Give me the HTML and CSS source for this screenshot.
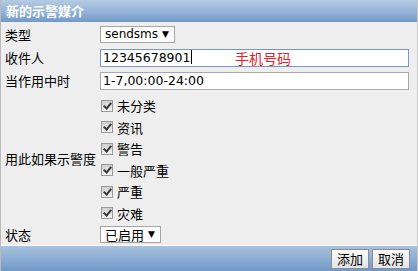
FILE: index.html
```html
<!DOCTYPE html>
<html lang="zh-CN">
<head>
    <meta charset="UTF-8">
    <title>新的示警媒介</title>
    <link rel="stylesheet" href="styles.css">
</head>
<body>
    <div class="dialog">
        <div class="title">新的示警媒介</div>
        <div class="form">
            <div class="row r1">
                <div class="label">类型</div>
                <div class="field"><div class="select sel-type"><span>sendsms</span><span class="arrow">▼</span></div></div>
            </div>
            <div class="row r2">
                <div class="label">收件人</div>
                <div class="field">
                    <div class="input focus">12345678901<span class="caret"></span></div>
                    <span class="hint">手机号码</span>
                </div>
            </div>
            <div class="row r3">
                <div class="label">当作用中时</div>
                <div class="field"><div class="input">1-7,00:00-24:00</div></div>
            </div>
            <div class="row checks">
                <div class="label">用此如果示警度</div>
                <div class="field list">
                    <div class="check"><span class="box"></span>未分类</div>
                    <div class="check"><span class="box"></span>资讯</div>
                    <div class="check"><span class="box"></span>警告</div>
                    <div class="check"><span class="box"></span>一般严重</div>
                    <div class="check"><span class="box"></span>严重</div>
                    <div class="check"><span class="box"></span>灾难</div>
                </div>
            </div>
            <div class="row r4">
                <div class="label">状态</div>
                <div class="field"><div class="select sel-state"><span>已启用</span><span class="arrow">▼</span></div></div>
            </div>
        </div>
        <div class="footer">
            <button class="btn">添加</button>
            <button class="btn">取消</button>
        </div>
    </div>
</body>
</html>
```

FILE: styles.css
```css
body {
    margin: 0;
    font-family: "DejaVu Sans", "Noto Sans CJK SC", sans-serif;
    font-size: 13px;
    color: #000;
    background: #ffffff;
}
.dialog {
    width: 416px;
    height: 271px;
    border-left: 1px solid #b9b9b9;
    border-right: 1px solid #c9c9c9;
    background: #eeeeee;
    display: flex;
    flex-direction: column;
}
.title {
    height: 22px;
    line-height: 22px;
    padding-left: 5px;
    color: #ffffff;
    font-family: "Noto Sans CJK SC", sans-serif;
    font-weight: bold;
    font-size: 13px;
    background: linear-gradient(#b6cbe3, #8fb0d6 60%, #7299c6);
}
.form {
    flex: 1;
    border-bottom: 1px solid #ffffff;
}
.row {
    display: flex;
    align-items: center;
}
.label {
    width: 95px;
    padding-left: 4px;
    font-family: "Noto Sans CJK SC", sans-serif;
    font-size: 13px;
}
.field {
    flex: 1;
    display: flex;
    align-items: center;
    position: relative;
}
.r1 { height: 24px; }
.r2 { height: 23px; }
.r3 { height: 23px; }
.r4 { height: 21px; }
.select {
    box-sizing: border-box;
    height: 17px;
    line-height: 15px;
    display: flex;
    justify-content: space-between;
    background: #ffffff;
    border: 1px solid #a5a5a5;
    padding: 0 5px 0 4px;
    font-size: 13px;
}
.sel-type {
    width: 75px;
    font-size: 12px;
}
.sel-state {
    width: 61px;
    font-family: "Noto Sans CJK SC", sans-serif;
}
.arrow {
    font-family: "DejaVu Sans", sans-serif;
    font-size: 9px;
}
.input {
    width: 305px;
    height: 16px;
    line-height: 16px;
    background: #ffffff;
    border: 1px solid #a9a9a9;
    padding-left: 2px;
    font-size: 12.5px;
}
.input.focus {
    border-color: #7897c4;
}
.caret {
    display: inline-block;
    width: 1px;
    height: 14px;
    background: #000;
    vertical-align: -2px;
    margin-left: 1px;
}
.hint {
    position: absolute;
    left: 135px;
    top: 0;
    color: #e8202a;
    font-family: "Noto Sans CJK SC", sans-serif;
    font-size: 14px;
    line-height: 18px;
}
.list {
    flex-direction: column;
    align-items: flex-start;
    padding: 3px 0 0 1px;
}
.check {
    height: 21.5px;
    display: flex;
    align-items: center;
    font-family: "Noto Sans CJK SC", sans-serif;
    font-size: 13px;
}
.box {
    width: 10px;
    height: 10px;
    margin-right: 4px;
    border: 1px solid #9a9a9a;
    background: linear-gradient(#cfcfcf, #f2f2f2);
    position: relative;
}
.box::after {
    content: "";
    position: absolute;
    left: 3px;
    top: 0px;
    width: 3px;
    height: 6px;
    border: solid #3a3a3a;
    border-width: 0 2px 2px 0;
    transform: rotate(40deg);
}
.footer {
    height: 27px;
    display: flex;
    justify-content: flex-end;
    align-items: center;
    gap: 3px;
    padding-right: 7px;
    background: linear-gradient(#a7c1de, #8aacd3 55%, #7098c6);
}
.btn {
    height: 20px;
    padding: 0 5px;
    margin: 0;
    font-family: "Noto Sans CJK SC", sans-serif;
    font-size: 13px;
    line-height: 18px;
    color: #000;
    background: linear-gradient(#fbfbfb, #e4e4e4);
    border: 1px solid #8d8d8d;
    border-radius: 0;
}
```
